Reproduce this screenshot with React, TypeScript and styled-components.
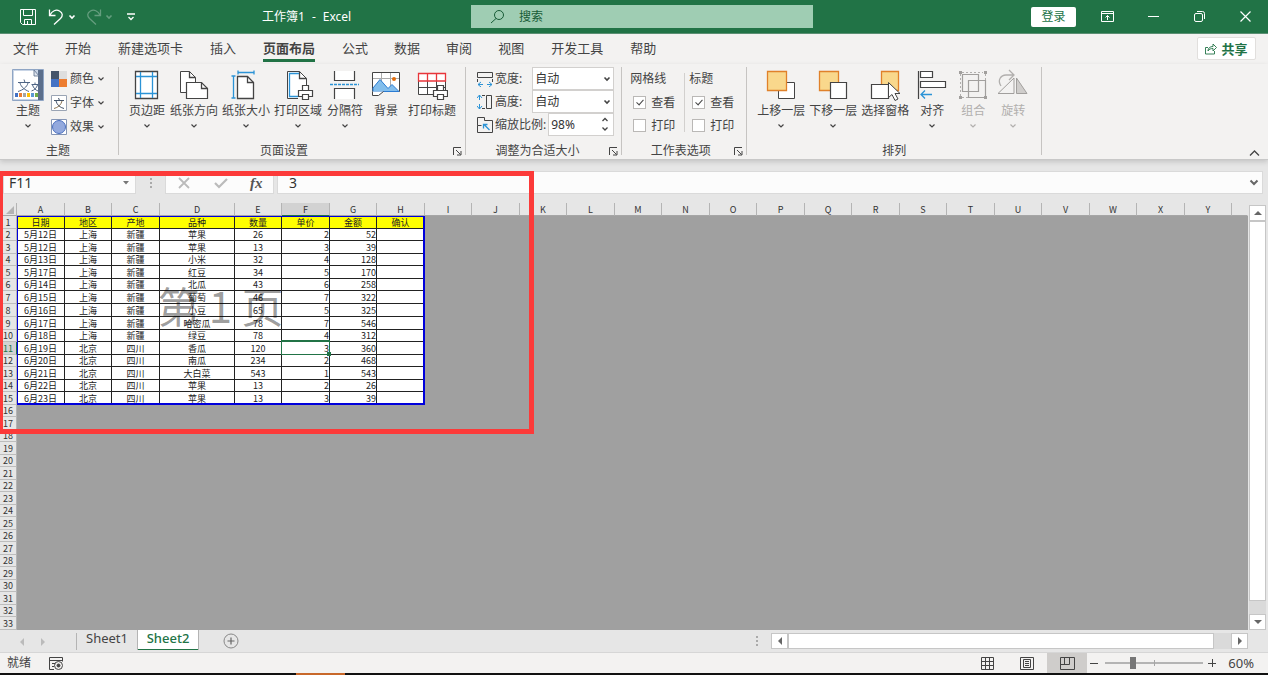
import React from 'react';
import styled, { createGlobalStyle, css } from 'styled-components';

const GlobalStyle = createGlobalStyle`
  *, *::before, *::after { box-sizing: border-box; }
  html, body, #root { margin: 0; height: 100%; }
  body {
    font-family: "Noto Sans", "Noto Sans CJK SC", sans-serif;
    font-size: 12px;
    line-height: 18px;
    color: #444;
    background: #e6e6e6;
  }
  button, input, select { font: inherit; color: inherit; margin: 0; padding: 0; border: 0; background: none; }
  svg { display: block; flex: none; }
`;

const Window = styled.div`
  display: flex;
  flex-direction: column;
  min-width: 1100px;
  min-height: 100vh;
  background: #e6e6e6;
`;

/* ---------- Title bar ---------- */

const TitleBar = styled.header`
  display: flex;
  align-items: center;
  height: 34px;
  color: #fff;
  background: #217346;
  border-bottom: 1px solid #5b8f73;
`;

const TitleLeft = styled.div`
  display: flex;
  align-items: center;
  flex: 0 0 471px;
  padding-left: 14px;
`;

const QuickAccess = styled.div`
  display: flex;
  align-items: center;
  flex: 0 0 248px;
`;

const IconButton = styled.button<{ $w?: number; $faded?: boolean; $end?: boolean }>`
  display: flex;
  align-items: center;
  justify-content: ${p => (p.$end ? 'flex-end' : 'center')};
  width: ${p => p.$w ?? 16}px;
  height: 24px;
  opacity: ${p => (p.$faded ? 0.3 : 1)};
`;

const DocTitle = styled.div`
  display: flex;
  gap: 7px;
  white-space: nowrap;
`;

const SearchBox = styled.label`
  display: flex;
  align-items: center;
  flex: 0 0 342px;
  gap: 14px;
  height: 23px;
  padding-left: 19px;
  color: #185c37;
  background: #9fcdb3;

  input { flex: 1; min-width: 0; outline: 0; }
  input::placeholder { color: #185c37; opacity: 1; }
`;

const TitleRight = styled.div`
  display: flex;
  align-items: center;
  margin-left: auto;
`;

const LoginButton = styled.button`
  width: 45px;
  height: 20px;
  margin-right: 8px;
  color: #217346;
  background: #fff;
  border-radius: 2px;
`;

/* ---------- Ribbon ---------- */

const TabRow = styled.nav`
  display: flex;
  height: 30px;
  font-size: 13px;
  background: #f3f2f1;
`;

const Tab = styled.button<{ $wide?: boolean; $active?: boolean }>`
  padding: 0 ${p => (p.$wide ? 14 : 13)}px;
  height: 28px;
  font-weight: ${p => (p.$active ? 700 : 400)};
  white-space: nowrap;

  span {
    display: block;
    height: 28px;
    line-height: 28px;
    border-bottom: 3px solid ${p => (p.$active ? '#217346' : 'transparent')};
  }
`;

const ShareButton = styled.button`
  display: flex;
  align-items: center;
  justify-content: center;
  gap: 4px;
  width: 59px;
  height: 23px;
  margin: 3px 12px 0 auto;
  font-weight: 700;
  color: #217346;
  background: #fff;
  border: 1px solid #e1dfdd;
  border-radius: 2px;
`;

const Ribbon = styled.section`
  position: relative;
  z-index: 1;
  display: flex;
  height: 96px;
  background: #f3f2f1;
  border-bottom: 1px solid #c8c8c8;
  box-shadow: 0 2px 5px rgba(0, 0, 0, 0.15);
`;

const GroupBox = styled.section<{ $pad: string }>`
  position: relative;
  display: flex;
  flex-direction: column;
  justify-content: space-between;
  padding: ${p => p.$pad};

  &::after {
    content: '';
    position: absolute;
    top: 3px;
    right: 0;
    bottom: 4px;
    width: 1px;
    background: #c6c4c2;
  }
`;

const GroupContent = styled.div`
  display: flex;
  height: 76px;
  padding-top: 3px;
`;

const GroupCaption = styled.div<{ $launcher?: boolean }>`
  height: 18px;
  line-height: 20px;
  padding-right: ${p => (p.$launcher ? 16 : 0)}px;
  text-align: center;
`;

const Launcher = styled.button`
  position: absolute;
  right: 4px;
  bottom: 3px;
`;

const BigButton = styled.button<{ $w: number; $disabled?: boolean }>`
  display: flex;
  flex-direction: column;
  align-items: center;
  width: ${p => p.$w}px;
  padding-top: 2px;
  color: ${p => (p.$disabled ? '#b1afad' : '#444')};
  white-space: nowrap;

  svg + span { margin-top: 1px; }
  span + svg { margin-top: 3px; }
`;

const Stack = styled.div`
  display: flex;
  flex-direction: column;
`;

const SmallButton = styled.button`
  display: flex;
  align-items: center;
  gap: 3px;
  height: 24px;
  padding: 0 3px;
`;

const FieldRow = styled.div`
  display: flex;
  align-items: center;
  gap: 2px;
  height: 23px;

  label { white-space: nowrap; }
`;

const Control = styled.div<{ $w: number }>`
  position: relative;
  width: ${p => p.$w}px;
  height: 23px;
  margin-left: auto;
  background: #fff;
  border: 1px solid #d2d0ce;

  select, input {
    width: 100%;
    height: 21px;
    padding-left: 2px;
    appearance: none;
    outline: 0;
    color: #333;
  }

  > svg, > div { position: absolute; right: 2px; top: 8px; pointer-events: none; }
  > div { top: 2px; right: 4px; display: grid; gap: 2px; }
`;

const CheckColumn = styled.div<{ $line?: boolean }>`
  position: relative;
  display: flex;
  flex-direction: column;
  height: 72px;
  padding: 3px ${p => (p.$line ? 10 : 13)}px 0 ${p => (p.$line ? 0 : 4)}px;

  > span { margin-bottom: 3px; }

  ${p =>
    p.$line &&
    css`
      &::after {
        content: '';
        position: absolute;
        right: 0;
        top: 6px;
        bottom: 7px;
        width: 1px;
        background: #d2d0ce;
      }
    `}
`;

const CheckLabel = styled.label`
  display: flex;
  align-items: center;
  flex: none;
  gap: 5px;
  height: 23px;
  padding-left: 3px;
`;

const Checkbox = styled.input`
  && {
    position: relative;
    appearance: none;
    width: 13px;
    height: 13px;
    background: #fff;
    border: 1px solid #bab8b6;
  }

  &:checked::after {
    content: '';
    position: absolute;
    left: 4px;
    top: 1px;
    width: 4px;
    height: 7px;
    border: solid #444;
    border-width: 0 1px 1px 0;
    transform: rotate(42deg);
  }
`;

const CollapseButton = styled.button`
  align-self: flex-end;
  margin: 0 8px 2px auto;
`;

/* ---------- Workspace ---------- */

const Workspace = styled.main`
  position: relative;
  display: flex;
  flex: 1;
  flex-direction: column;
  margin-top: 11px;
`;

const FormulaBar = styled.div`
  display: flex;
  height: 23px;
  padding: 0 5px 0 3px;
  color: #333;
  font-size: 14px;
`;

const NameBox = styled.div`
  display: flex;
  align-items: center;
  width: 133px;
  padding: 0 6px 0 5px;
  background: #fcfcfc;
  border: 1px solid #dadada;

  input { flex: 1; min-width: 0; outline: 0; }
`;

const DotGrip = styled.div`
  display: grid;
  flex: none;
  align-content: center;
  justify-content: center;
  gap: 2px;
  width: 29px;

  i { width: 2px; height: 2px; background: #aaa; }
`;

const FormulaTools = styled.div`
  display: flex;
  align-items: center;
  justify-content: space-around;
  width: 109px;
  background: #fcfcfc;
  border: 1px solid #dadada;
`;

const FxButton = styled.button`
  font: italic 700 15px/18px "Liberation Serif", serif;
  color: #555;
`;

const FormulaInput = styled.div`
  display: flex;
  align-items: center;
  flex: 1;
  margin-left: 3px;
  padding: 0 3px 0 11px;
  background: #fcfcfc;
  border: 1px solid #dadada;

  input { flex: 1; min-width: 0; outline: 0; }
  svg { color: #666; }
`;

const SheetArea = styled.div`
  display: flex;
  flex: 1;
  margin-top: 9px;
`;

const SheetPane = styled.div`
  position: relative;
  flex: 1;
  min-width: 0;
  overflow: hidden;
  background: #a0a0a0;
`;

const SheetTable = styled.table`
  width: 100%;
  table-layout: fixed;
  border-collapse: separate;
  border-spacing: 0;
  font-family: "Noto Sans CJK SC", "Noto Sans", sans-serif;
  font-size: 9px;
  line-height: 11px;
  color: #222;

  tr { height: 12px; }
  thead tr, tbody tr:nth-child(odd), tbody tr:nth-child(8) { height: 13px; }
  th, td { padding: 0; overflow: hidden; white-space: nowrap; }
  th { padding-top: 1px; line-height: 10px; }
  thead th:first-child { padding: 0; }
`;

const ColHead = styled.th<{ $active?: boolean }>`
  font-weight: 400;
  color: #333;
  background: ${p => (p.$active ? '#d2d2d2' : '#e6e6e6')};
  border-right: 1px solid #b4b4b4;
  border-bottom: 1px solid ${p => (p.$active ? '#217346' : '#a6a6a6')};

  &:last-child { border-right-color: transparent; }
`;

const RowHead = styled.th<{ $active?: boolean }>`
  font-weight: 400;
  color: ${p => (p.$active ? '#217346' : '#333')};
  background: ${p => (p.$active ? '#d2d2d2' : '#e6e6e6')};
  border-right: 1px solid ${p => (p.$active ? '#217346' : '#b4b4b4')};
  border-bottom: 1px solid #bdbdbd;
`;

const Cell = styled.td<{ $right?: boolean; $head?: boolean }>`
  text-align: ${p => (p.$right ? 'right' : 'center')};
  background: ${p => (p.$head ? '#ffff00' : '#fff')};
  border-right: 1px solid #222;
  border-bottom: 1px solid #222;
`;

const PageOutline = styled.div`
  position: absolute;
  left: 17px;
  top: 13px;
  display: flex;
  align-items: center;
  justify-content: center;
  width: 408px;
  height: 189px;
  padding-bottom: 11px;
  border: solid #0000dc;
  border-width: 1px 2px 2px 1px;
  font: 400 42px/48px "Noto Sans CJK SC", sans-serif;
  color: rgba(0, 0, 0, 0.4);
  pointer-events: none;
`;

const ActiveCell = styled.div`
  position: absolute;
  left: 281px;
  top: 137px;
  width: 49px;
  height: 15px;
  border: 1px solid #217346;
  border-top-width: 2px;
  pointer-events: none;

  &::after {
    content: '';
    position: absolute;
    right: -2px;
    bottom: -2px;
    width: 4px;
    height: 4px;
    background: #217346;
  }
`;

const Highlight = styled.div`
  position: absolute;
  left: 0;
  top: 0;
  width: 534px;
  height: 263px;
  border: 5px solid #fc3a39;
  border-left-width: 3px;
  pointer-events: none;
`;

const VScroll = styled.div`
  display: flex;
  flex-direction: column;
  width: 20px;
  padding: 2px 2px 0 1px;
`;

const ScrollButton = styled.button`
  && {
    display: flex;
    align-items: center;
    justify-content: center;
    flex: none;
    width: 17px;
    height: 16px;
    background: #fff;
    border: 1px solid #c6c6c6;
  }
`;

const Track = styled.div<{ $vertical?: boolean }>`
  display: flex;
  flex: 1;
  flex-direction: ${p => (p.$vertical ? 'column' : 'row')};
  width: ${p => (p.$vertical ? '17px' : 'auto')};
  padding: ${p => (p.$vertical ? '0 0 13px' : '0 17px 0 0')};
  background: #dadada;

  div { flex: 1; background: #fff; border: 1px solid #c6c6c6; }
`;

/* ---------- Bottom bars ---------- */

const SheetTabs = styled.div`
  display: flex;
  height: 22px;
  font-size: 13px;
`;

const SheetNav = styled.div`
  display: flex;
  align-items: center;
  width: 77px;
  padding-left: 14px;
  gap: 5px;
  border-right: 1px solid #b4b4b4;
  margin: 3px 0 2px;
`;

const SheetTab = styled.button<{ $active?: boolean }>`
  && {
    width: ${p => (p.$active ? 62 : 60)}px;
    height: 20px;
    padding-bottom: 3px;
    line-height: 17px;
    ${p =>
      p.$active &&
      css`
        font-weight: 500;
        color: #217346;
        background: #fff;
        border: solid #b4b4b4;
        border-width: 0 1px;
        box-shadow: inset 0 -1px #217346;
      `}
  }
`;

const AddSheet = styled.button`
  && {
    width: 16px;
    margin-left: 24px;
  }
`;

const HScroll = styled.div`
  display: flex;
  width: 526px;
  margin-left: auto;
  padding: 3px 20px 3px 0;
`;

const StatusBar = styled.footer`
  display: flex;
  align-items: center;
  height: 21px;
  padding-left: 7px;
  background: #f3f2f1;
  border-top: 1px solid #d6d6d6;
`;

const StatusLeft = styled.div`
  display: flex;
  align-items: center;
  gap: 18px;
`;

const StatusRight = styled.div`
  display: flex;
  align-items: center;
  margin-left: auto;
  padding-right: 14px;
`;

const ViewButton = styled.button<{ $active?: boolean }>`
  && {
    display: flex;
    align-items: center;
    justify-content: center;
    width: 40px;
    height: 20px;
    background: ${p => (p.$active ? '#cfcdcb' : 'transparent')};
  }
`;

const ZoomSlider = styled.input`
  && {
    appearance: none;
    width: 98px;
    height: 12px;
    margin: 0 4px;
    background:
      linear-gradient(#a6a6a6, #a6a6a6) center / 1px 6px no-repeat,
      linear-gradient(#b4b4b4, #b4b4b4) center / 100% 2px no-repeat;
  }

  &::-webkit-slider-thumb {
    appearance: none;
    width: 6px;
    height: 12px;
    background: #777;
  }
`;

const ZoomValue = styled.span`
  margin-left: 11px;
  font-size: 13px;
`;

const TaskbarEdge = styled.div`
  height: 2px;
  padding-left: 296px;
  background: #111;

  div { width: 49px; height: 2px; background: #c8682a; }
`;

/* ---------- Icons ---------- */

const Svg = ({ w = 32, h = w, children }: { w?: number; h?: number; children: React.ReactNode }) => (
  <svg width={w} height={h} viewBox={`0 0 ${w} ${h}`} fill="none" stroke="currentColor" aria-hidden="true">
    {children}
  </svg>
);

const Chevron = ({ bold }: { bold?: boolean }) => (
  <Svg w={8} h={6}>
    <path d="M1.500 1.500 4 4l2.500-2.500" strokeWidth={bold ? 1.6 : 1.2} />
  </Svg>
);

const Triangle = ({ dir, color = '#666' }: { dir: 'up' | 'down' | 'left' | 'right'; color?: string }) => {
  const shapes = {
    up: 'M1 7 5 3l4 4z',
    down: 'M1 3l4 4 4-4z',
    left: 'M7 1 3 5l4 4z',
    right: 'M3 1l4 4-4 4z',
  };
  return (
    <Svg w={10}>
      <path d={shapes[dir]} fill={color} stroke="none" />
    </Svg>
  );
};

const LauncherIcon = () => (
  <Svg w={9}>
    <path d="M.5 8V.5H8M3 3l4.500 4.500M8 4v4H4" />
  </Svg>
);

const Printer = ({ x, y }: { x: number; y: number }) => (
  <g transform={`translate(${x} ${y})`} fill="#fff" strokeWidth="1.200">
    <path d="M4.500 5.500v-5h6v5z" />
    <path d="M.5 5.500h14v6H.5z" />
    <path d="M4.500 9.500h6v5h-6z" />
  </g>
);

const ThemeIcon = () => (
  <Svg>
    <path d="M.5.5h31v31H.5z" fill="#c9d5e6" stroke="#8fa5c4" />
    <path d="M2 2h20l7 7v21H2z" fill="#fff" stroke="none" />
    <path d="M26 1h5v30h-5z" fill="#5c6f8c" stroke="none" />
    <path d="M22 1v6h5z" fill="#dfe5ee" stroke="#5c6f8c" strokeWidth=".8" />
    <path d="M6 13.500h12M12 10.500l1 3M8 14c1 4 5 7 9 8.500M16 14c-1 4-5 7-10 8.500M19.500 15.500h7M23 13.500v2M20.500 16c1 3 3 5 5.500 6M25.500 16c-1 3-3 5-6 6" stroke="#4f6584" />
    <g stroke="none">
      <path fill="#4472c4" d="M3 24h3v4H3z" /><path fill="#ed7d31" d="M7 24h3v4H7z" />
      <path fill="#a5a5a5" d="M11 24h3v4h-3z" /><path fill="#ffc000" d="M15 24h3v4h-3z" />
      <path fill="#5b9bd5" d="M19 24h3v4h-3z" /><path fill="#70ad47" d="M23 24h3v4h-3z" />
    </g>
  </Svg>
);

const ColorsIcon = () => (
  <Svg w={16}>
    <g stroke="none">
      <path fill="#44546a" d="M0 0h8v8H0z" /><path fill="#dedede" d="M8 0h8v8H8z" />
      <path fill="#4472c4" d="M0 8h8v8H0z" /><path fill="#ed7d31" d="M8 8h8v8H8z" />
    </g>
  </Svg>
);

const FontsIcon = () => (
  <Svg w={16}>
    <path d="M.5.5h15v15H.5z" fill="#fff" stroke="#9aa4b4" />
    <path d="M3 5.500h10M7.500 3l1 2.500M5 6c1 4 4 6.500 8 7.500" stroke="#44546a" />
    <path d="M11 6c-1 4-4 6.500-8 7.500" stroke="#8a7350" />
  </Svg>
);

const EffectsIcon = () => (
  <Svg w={16}>
    <path d="M.5.5h15v15H.5z" fill="#fff" stroke="#8495b5" />
    <circle cx="8" cy="8" r="6.500" fill="#93a9dd" stroke="#4a6fbf" />
  </Svg>
);

const MarginsIcon = () => (
  <Svg>
    <path d="M4.500 2.500h22v27h-22z" fill="#fff" strokeWidth="1.300" />
    <path d="M9.500 3v26M21.500 3v26M5 7.500h21M5 24.500h21" stroke="#2b93d6" strokeWidth="1.300" />
  </Svg>
);

const OrientationIcon = () => (
  <Svg>
    <path d="M2.500 2.500h9l6 6v15h-15z" fill="#fff" />
    <path d="M11.500 2.500v6h6" strokeWidth="1.300" />
    <path d="M8.500 13.500h15l6 6v10h-21z" fill="#fff" strokeWidth="1.200" />
    <path d="M23.500 13.500v6h6" strokeWidth="1.300" />
  </Svg>
);

const SizeIcon = () => (
  <Svg>
    <path d="M7.500 7.500h10l6 6v16h-16z" fill="#fff" strokeWidth="1.300" />
    <path d="M17.500 7.500v6h6" strokeWidth="1.300" />
    <path d="M8 3.500h16M8 1.500v4M24 1.500v4M3.500 7v22M1.500 7h4M1.500 29h4" stroke="#2b93d6" strokeWidth="1.300" />
  </Svg>
);

const PrintAreaIcon = () => (
  <Svg>
    <path d="M16 29.500H5.500v-27h12l7 7V17" fill="#fff" />
    <path d="M17.500 2.500v7h7" strokeWidth="1.300" />
    <path d="M16 27.500H7.500v-23H17" stroke="#2b93d6" strokeWidth="1.300" />
    <Printer x={16} y={16} />
  </Svg>
);

const BreaksIcon = () => (
  <Svg>
    <path d="M5.500 2v9.500h20V2M5.500 30V19.500h20V30" fill="#fff" strokeWidth="1.200" />
    <path d="M1 15.500h29" stroke="#2b93d6" strokeWidth="1.300" strokeDasharray="3 1" />
  </Svg>
);

const BackgroundIcon = () => (
  <Svg>
    <path d="M2.500 3.500h27v19h-27z" fill="#fff" />
    <path d="M3 9.500h26M11.500 4v18M20.500 4v18" stroke="#aaa" />
    <path d="M3 19l7-8.500 8 9 4-4 7 7H3z" fill="#83beec" stroke="#2b7cd3" />
    <circle cx="24" cy="10" r="2" fill="#e36c0a" stroke="none" />
    <path d="M2.500 22.500v4h6l5-4" fill="#fff" />
  </Svg>
);

const PrintTitlesIcon = () => (
  <Svg>
    <path d="M2.500 12v13.500h27V12M2.500 18.500h27M11.500 12v13M20.500 12v13" fill="#fff" />
    <path d="M2.500 4.500h27v7.500h-27zM11.500 5v7M20.500 5v7" fill="#fff" stroke="#e8363b" strokeWidth="1.300" />
    <Printer x={17} y={16} />
  </Svg>
);

const BringForwardIcon = () => (
  <Svg>
    <path d="M13.500 13.500h16v16h-16z" fill="#fff" />
    <path d="M2.500 2.500h19v19h-19z" fill="#f9d88c" stroke="#e0812a" strokeWidth="1.300" />
  </Svg>
);

const SendBackwardIcon = () => (
  <Svg>
    <path d="M2.500 2.500h19v19h-19z" fill="#f9d88c" stroke="#e0812a" strokeWidth="1.300" />
    <path d="M13.500 13.500h16v16h-16z" fill="#fff" strokeWidth="1.200" />
  </Svg>
);

const SelectionPaneIcon = () => (
  <Svg>
    <path d="M12.500 2.500h17v19h-17z" fill="#f9d88c" stroke="#e0812a" strokeWidth="1.300" />
    <path d="M2.500 15.500h17v14h-17z" fill="#fff" strokeWidth="1.200" />
    <path d="M19.500 13.500v15l3.500-3 3 6 3-1.500-3-5.500h5z" fill="#fff" />
  </Svg>
);

const AlignIcon = () => (
  <Svg>
    <path d="M2.500 2v28" strokeWidth="1.200" />
    <path d="M4.500 2.500h12v6h-12zM4.500 12.500h25v6h-25z" fill="#fff" strokeWidth="1.200" />
    <path d="M16 25.500H5M9 21.500l-4 4 4 4" stroke="#2b93d6" strokeWidth="1.300" />
  </Svg>
);

const GroupIcon = () => (
  <Svg>
    <path d="M5 3.500h21M5 28.500h21M3.500 5v22M28.500 5v22" strokeDasharray="2 2" />
    <path d="M5.500 5.500h16v17h-16zM11.500 11.500h17v17h-17z" stroke="#a19f9d" strokeWidth="1.200" />
    <path d="M2 2h3v3H2zM27 2h3v3h-3zM2 27h3v3H2zM27 27h3v3h-3z" fill="#a19f9d" stroke="none" />
  </Svg>
);

const RotateIcon = () => (
  <Svg>
    <path d="M1 24.500h16V9z" fill="#f3f2f1" stroke="#a19f9d" />
    <path d="M19.500 24.500V9l10.500 15.500z" fill="#cfcdcb" stroke="#a19f9d" />
    <path d="M4 17c-4-6 0-11 5-11h7M12 1l5 5-5 5" strokeWidth="1.300" />
  </Svg>
);

const WidthIcon = () => (
  <Svg w={16}>
    <path d="M.5 1.500h15v5H.5zM.5 8v3M15.500 8v3" />
    <path d="M1 13.500h5M10 13.500h5M4 11l-3 2.500L4 16M12 11l3 2.500-3 2.500" stroke="#2b93d6" />
  </Svg>
);

const HeightIcon = () => (
  <Svg w={16}>
    <path d="M9.500 1.500h5v13h-5zM5 1.500h3M5 14.500h3" />
    <path d="M2.500 1v5M2.500 10v5M0 4l2.500-3L5 4M0 12l2.500 3L5 12" stroke="#2b93d6" />
  </Svg>
);

const ScaleIcon = () => (
  <Svg w={16}>
    <path d="M.5 8.500v-8h7v3h8v12H.5v-7h4" />
    <path d="M12.500 13 7 7.500M6.500 11.500v-4h4" stroke="#2b93d6" strokeWidth="1.300" />
  </Svg>
);

/* ---------- Data ---------- */

const TABS = ['文件', '开始', '新建选项卡', '插入', '页面布局', '公式', '数据', '审阅', '视图', '开发工具', '帮助'];

const PAGE_SETUP = [
  { label: '页边距', w: 42, icon: <MarginsIcon />, menu: true },
  { label: '纸张方向', w: 52, icon: <OrientationIcon />, menu: true },
  { label: '纸张大小', w: 52, icon: <SizeIcon />, menu: true },
  { label: '打印区域', w: 52, icon: <PrintAreaIcon />, menu: true },
  { label: '分隔符', w: 42, icon: <BreaksIcon />, menu: true },
  { label: '背景', w: 40, icon: <BackgroundIcon /> },
  { label: '打印标题', w: 52, icon: <PrintTitlesIcon /> },
];

const ARRANGE = [
  { label: '上移一层', w: 52, icon: <BringForwardIcon />, menu: true },
  { label: '下移一层', w: 52, icon: <SendBackwardIcon />, menu: true },
  { label: '选择窗格', w: 52, icon: <SelectionPaneIcon /> },
  { label: '对齐', w: 42, icon: <AlignIcon />, menu: true },
  { label: '组合', w: 40, icon: <GroupIcon />, menu: true, disabled: true },
  { label: '旋转', w: 40, icon: <RotateIcon />, menu: true, disabled: true },
];

const THEME_PARTS = [
  { label: '颜色', icon: <ColorsIcon /> },
  { label: '字体', icon: <FontsIcon /> },
  { label: '效果', icon: <EffectsIcon /> },
];

const COLUMNS = 'ABCDEFGHIJKLMNOPQRSTUVWXY'.split('');
const columnWidth = (i: number) => (i === 3 ? 75 : (i < 3 ? i : i + 1) % 2 ? 47 : 48);

const ROWS: string[][] = [
  ['日期', '地区', '产地', '品种', '数量', '单价', '金额', '确认'],
  ['5月12日', '上海', '新疆', '苹果', '26', '2', '52', ''],
  ['5月12日', '上海', '新疆', '苹果', '13', '3', '39', ''],
  ['6月13日', '上海', '新疆', '小米', '32', '4', '128', ''],
  ['5月17日', '上海', '新疆', '红豆', '34', '5', '170', ''],
  ['6月14日', '上海', '新疆', '北瓜', '43', '6', '258', ''],
  ['6月15日', '上海', '新疆', '葡萄', '46', '7', '322', ''],
  ['6月16日', '上海', '新疆', '小豆', '65', '5', '325', ''],
  ['6月17日', '上海', '新疆', '哈密瓜', '78', '7', '546', ''],
  ['6月18日', '上海', '新疆', '绿豆', '78', '4', '312', ''],
  ['6月19日', '北京', '四川', '香瓜', '120', '3', '360', ''],
  ['6月20日', '北京', '四川', '南瓜', '234', '2', '468', ''],
  ['6月21日', '北京', '四川', '大白菜', '543', '1', '543', ''],
  ['6月22日', '北京', '四川', '苹果', '13', '2', '26', ''],
  ['6月23日', '北京', '四川', '苹果', '13', '3', '39', ''],
];
const ROW_COUNT = 33;

/* ---------- Parts ---------- */

interface Command {
  label: string;
  w: number;
  icon: React.ReactNode;
  menu?: boolean;
  disabled?: boolean;
}

const CommandButton = ({ label, w, icon, menu, disabled }: Command) => (
  <BigButton $w={w} $disabled={disabled} disabled={disabled}>
    {icon}
    <span>{label}</span>
    {menu && <Chevron />}
  </BigButton>
);

const Group = ({ caption, pad, launcher, children }: { caption: string; pad: string; launcher?: boolean; children: React.ReactNode }) => (
  <GroupBox $pad={pad}>
    <GroupContent>{children}</GroupContent>
    <GroupCaption $launcher={launcher}>{caption}</GroupCaption>
    {launcher && (
      <Launcher aria-label={caption}>
        <LauncherIcon />
      </Launcher>
    )}
  </GroupBox>
);

const Sheet = () => (
  <SheetPane>
    <SheetTable>
      <colgroup>
        <col width={17} />
        {COLUMNS.map((c, i) => (
          <col key={c} width={columnWidth(i)} />
        ))}
        <col />
      </colgroup>
      <thead>
        <tr>
          <ColHead>
            <Svg w={16} h={11}>
              <path d="M14 2v8H6z" fill="#b4b4b4" stroke="none" />
            </Svg>
          </ColHead>
          {COLUMNS.map(c => (
            <ColHead key={c} $active={c === 'F'} scope="col">
              {c}
            </ColHead>
          ))}
          <ColHead />
        </tr>
      </thead>
      <tbody>
        {Array.from({ length: ROW_COUNT }, (_, r) => (
          <tr key={r}>
            <RowHead $active={r === 10} scope="row">
              {r + 1}
            </RowHead>
            {ROWS[r]?.map((text, c) => (
              <Cell key={c} $head={r === 0} $right={r > 0 && (c === 5 || c === 6)}>
                {text}
              </Cell>
            ))}
            <td colSpan={ROWS[r] ? 18 : 26} />
          </tr>
        ))}
      </tbody>
    </SheetTable>
    <PageOutline>第 1 页</PageOutline>
    <ActiveCell />
  </SheetPane>
);

export default function App() {
  return (
    <Window>
      <GlobalStyle />
      <TitleBar>
        <TitleLeft>
          <QuickAccess>
            <IconButton $w={28} aria-label="保存">
              <Svg w={16}>
                <path d="M.5.5h15v15h-13l-2-2zM3.500.5v6h9v-6M4.500 15.500v-5h7v5M7.500 12v3" />
              </Svg>
            </IconButton>
            <IconButton $w={22} $end aria-label="撤消">
              <Svg w={16} h={17}>
                <path d="M1.500 1.500v6h6M2 7c2-4 6-6 9.500-4s3.500 5 1 7.500L6 16.500" strokeWidth="1.300" />
              </Svg>
            </IconButton>
            <IconButton aria-label="撤消列表"><Chevron bold /></IconButton>
            <IconButton $w={22} $end $faded aria-label="恢复">
              <Svg w={16} h={17}>
                <path d="M14.500 1.500v6h-6M14 7c-2-4-6-6-9.500-4s-3.500 5-1 7.500l6.500 6" strokeWidth="1.300" />
              </Svg>
            </IconButton>
            <IconButton $w={14} $faded aria-label="恢复列表"><Chevron bold /></IconButton>
            <IconButton $w={30} aria-label="自定义">
              <Svg w={8} h={8}>
                <path d="M0 1h8M1.500 4 4 6.500 6.500 4" strokeWidth="1.300" />
              </Svg>
            </IconButton>
          </QuickAccess>
          <DocTitle>
            <span>工作簿1</span>
            <span>-</span>
            <span>Excel</span>
          </DocTitle>
        </TitleLeft>
        <SearchBox>
          <Svg w={15}>
            <circle cx="9" cy="6" r="4.500" />
            <path d="M6 9.500 1 14" />
          </Svg>
          <input type="text" placeholder="搜索" aria-label="搜索" />
        </SearchBox>
        <TitleRight>
          <LoginButton>登录</LoginButton>
          <IconButton $w={46} aria-label="功能区显示选项">
            <Svg w={13} h={11}>
              <path d="M.5.5h12v10H.5zM.5 2.500h12M6.500 9V4.500M4.500 6.500l2-2 2 2" />
            </Svg>
          </IconButton>
          <IconButton $w={46} aria-label="最小化">
            <Svg w={11}><path d="M0 5.500h11" /></Svg>
          </IconButton>
          <IconButton $w={46} aria-label="还原">
            <Svg w={11}>
              <rect x=".5" y="2.500" width="8" height="8" rx="1.500" />
              <path d="M3 .5h5.500a2 2 0 0 1 2 2V8" />
            </Svg>
          </IconButton>
          <IconButton $w={46} aria-label="关闭">
            <Svg w={11}><path d="m.5.5 10 10M10.500.5l-10 10" strokeWidth="1.200" /></Svg>
          </IconButton>
        </TitleRight>
      </TitleBar>

      <TabRow>
        {TABS.map(t => (
          <Tab key={t} $wide={t.length > 2} $active={t === '页面布局'}>
            <span>{t}</span>
          </Tab>
        ))}
        <ShareButton>
          <Svg w={12}>
            <path d="M3 4.500H.5V11h9V8M3 8c0-3 2-4.500 5-4.500V1l3.500 3.500L8 8V5.500C6 5.500 4 6 3 8z" strokeWidth=".9" />
          </Svg>
          共享
        </ShareButton>
      </TabRow>

      <Ribbon>
        <Group caption="主题" pad="0 11px 0 8px">
          <CommandButton label="主题" w={40} icon={<ThemeIcon />} menu />
          <Stack>
            {THEME_PARTS.map(p => (
              <SmallButton key={p.label}>
                {p.icon}
                {p.label}
                <Chevron />
              </SmallButton>
            ))}
          </Stack>
        </Group>

        <Group caption="页面设置" pad="0 8px 0 7px" launcher>
          {PAGE_SETUP.map(c => (
            <CommandButton key={c.label} {...c} />
          ))}
        </Group>

        <Group caption="调整为合适大小" pad="0 8px 0 11px" launcher>
          <Stack>
            <FieldRow>
              <WidthIcon />
              <label htmlFor="fit-width">宽度:</label>
              <Control $w={82}>
                <select id="fit-width"><option>自动</option></select>
                <Chevron bold />
              </Control>
            </FieldRow>
            <FieldRow>
              <HeightIcon />
              <label htmlFor="fit-height">高度:</label>
              <Control $w={82}>
                <select id="fit-height"><option>自动</option></select>
                <Chevron bold />
              </Control>
            </FieldRow>
            <FieldRow>
              <ScaleIcon />
              <label htmlFor="fit-scale">缩放比例:</label>
              <Control $w={66}>
                <input id="fit-scale" type="text" defaultValue="98%" />
                <div>
                  <Svg w={8} h={7}><path d="M1.500 5 4 2.500 6.500 5" strokeWidth="1.300" /></Svg>
                  <Svg w={8} h={7}><path d="M1.500 2.500 4 5l2.500-2.500" strokeWidth="1.300" /></Svg>
                </div>
              </Control>
            </FieldRow>
          </Stack>
        </Group>

        <Group caption="工作表选项" pad="0 0 0 8px" launcher>
          <CheckColumn $line>
            <span>网格线</span>
            <CheckLabel><Checkbox type="checkbox" defaultChecked />查看</CheckLabel>
            <CheckLabel><Checkbox type="checkbox" />打印</CheckLabel>
          </CheckColumn>
          <CheckColumn>
            <span>标题</span>
            <CheckLabel><Checkbox type="checkbox" defaultChecked />查看</CheckLabel>
            <CheckLabel><Checkbox type="checkbox" />打印</CheckLabel>
          </CheckColumn>
        </Group>

        <Group caption="排列" pad="0 9px 0 8px">
          {ARRANGE.map(c => (
            <CommandButton key={c.label} {...c} />
          ))}
        </Group>

        <CollapseButton aria-label="折叠功能区">
          <Svg w={11} h={8}><path d="m1 6.500 4.500-4.500L10 6.500" strokeWidth="1.300" /></Svg>
        </CollapseButton>
      </Ribbon>

      <Workspace>
        <FormulaBar>
          <NameBox>
            <input type="text" defaultValue="F11" aria-label="名称框" />
            <Svg w={6} h={4}><path d="M0 0h6L3 3.500z" fill="#777" stroke="none" /></Svg>
          </NameBox>
          <DotGrip><i /><i /><i /></DotGrip>
          <FormulaTools>
            <IconButton aria-label="取消">
              <Svg w={12}><path d="m1 1 10 10M11 1 1 11" stroke="#bbb" strokeWidth="1.800" /></Svg>
            </IconButton>
            <IconButton aria-label="输入">
              <Svg w={14} h={12}><path d="m1 6 4 4 8-8" stroke="#bbb" strokeWidth="2.200" /></Svg>
            </IconButton>
            <FxButton aria-label="插入函数">fx</FxButton>
          </FormulaTools>
          <FormulaInput>
            <input type="text" defaultValue="3" aria-label="编辑栏" />
            <Svg w={10} h={7}><path d="m1.500 1.500 3.500 3.500 3.500-3.500" strokeWidth="2" /></Svg>
          </FormulaInput>
        </FormulaBar>

        <SheetArea>
          <Sheet />
          <VScroll>
            <ScrollButton aria-label="向上"><Triangle dir="up" /></ScrollButton>
            <Track $vertical><div /></Track>
            <ScrollButton aria-label="向下"><Triangle dir="down" /></ScrollButton>
          </VScroll>
        </SheetArea>
        <Highlight />
      </Workspace>

      <SheetTabs>
        <SheetNav>
          <IconButton aria-label="上一张"><Triangle dir="left" color="#bbb" /></IconButton>
          <IconButton aria-label="下一张"><Triangle dir="right" color="#bbb" /></IconButton>
        </SheetNav>
        <SheetTab>Sheet1</SheetTab>
        <SheetTab $active>Sheet2</SheetTab>
        <AddSheet aria-label="新工作表">
          <Svg w={16}>
            <circle cx="8" cy="8" r="7" stroke="#888" />
            <path d="M4.500 8h7M8 4.500v7" stroke="#666" strokeWidth="1.200" />
          </Svg>
        </AddSheet>
        <HScroll>
          <DotGrip><i /><i /><i /></DotGrip>
          <ScrollButton aria-label="向左"><Triangle dir="left" /></ScrollButton>
          <Track><div /></Track>
          <ScrollButton aria-label="向右"><Triangle dir="right" /></ScrollButton>
        </HScroll>
      </SheetTabs>

      <StatusBar>
        <StatusLeft>
          <span>就绪</span>
          <Svg w={15} h={13}>
            <path d="M5 12.500H.5V.5h13v4M.5 3.500h13M3 6.500h3M3 9.500h2" />
            <circle cx="9.500" cy="8.500" r="4" />
            <circle cx="9.500" cy="8.500" r="1.500" fill="currentColor" />
          </Svg>
        </StatusLeft>
        <StatusRight>
          <ViewButton aria-label="普通">
            <Svg w={13}><path d="M.5.5h12v12H.5zM4.500 0v13M8.500 0v13M0 4.500h13M0 8.500h13" /></Svg>
          </ViewButton>
          <ViewButton aria-label="页面布局">
            <Svg w={14} h={13}><path d="M.5.5h13v12H.5zM3.500 2.500h7v8h-7zM5 4.500h4M5 6.500h4M5 8.500h4" /></Svg>
          </ViewButton>
          <ViewButton $active aria-label="分页预览">
            <Svg w={15} h={13}><path d="M.5.5h14v12H.5zM4.500.5v7M.5 7.500h9v-7" /></Svg>
          </ViewButton>
          <IconButton $w={14} aria-label="缩小"><Svg w={8}><path d="M0 4.500h8" /></Svg></IconButton>
          <ZoomSlider type="range" min={0} max={100} defaultValue={27} aria-label="缩放" />
          <IconButton $w={10} aria-label="放大"><Svg w={8}><path d="M0 4.500h8M4.500 0v8" /></Svg></IconButton>
          <ZoomValue>60%</ZoomValue>
        </StatusRight>
      </StatusBar>
      <TaskbarEdge><div /></TaskbarEdge>
    </Window>
  );
}
